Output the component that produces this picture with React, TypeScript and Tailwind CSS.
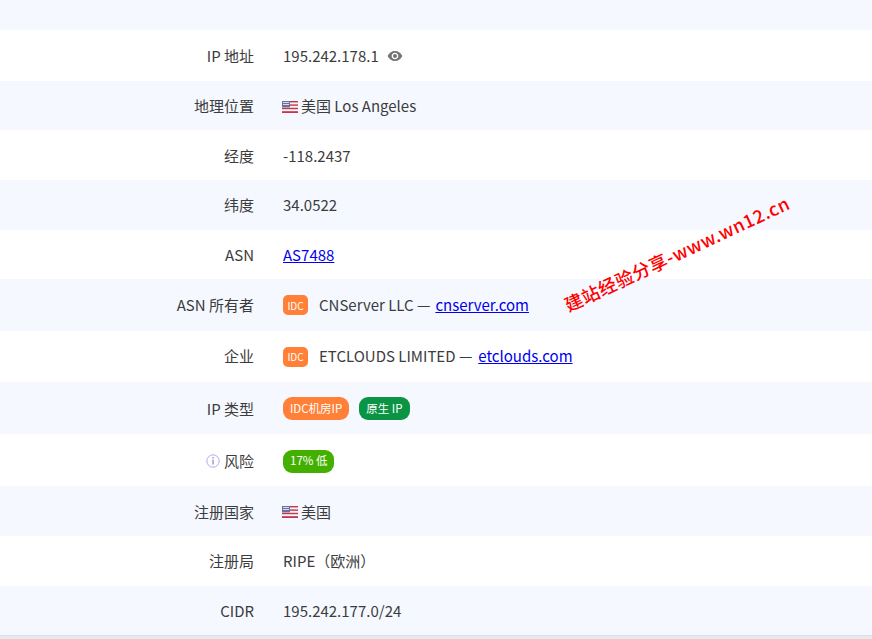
import { ReactNode } from 'react';

function UsFlag() {
  return (
    <svg width="16" height="12" viewBox="0 0 16 12" className="-ml-px shrink-0">
      <rect width="16" height="12" fill="#f4f4f6" />
      <rect y="0" width="16" height="1.4" fill="#c0394b" />
      <rect y="3.4" width="16" height="1.4" fill="#c0394b" />
      <rect y="6.8" width="16" height="1.4" fill="#c0394b" />
      <rect y="10.2" width="16" height="1.8" fill="#c0394b" />
      <rect width="8" height="6.4" fill="#6b6f9e" />
      <rect x="1" y="1" width="6" height="1" fill="#dcdcea" />
      <rect x="1" y="3" width="6" height="1" fill="#dcdcea" />
    </svg>
  );
}

function Eye() {
  return (
    <svg width="16" height="16" viewBox="0 0 24 24" fill="#757575" className="-mt-[2px] ml-2">
      <path d="M12 4.5C7 4.5 2.73 7.61 1 12c1.73 4.39 6 7.5 11 7.5s9.27-3.11 11-7.5c-1.73-4.39-6-7.5-11-7.5zM12 17c-2.76 0-5-2.24-5-5s2.24-5 5-5 5 2.24 5 5-2.24 5-5 5zm0-8c-1.66 0-3 1.34-3 3s1.34 3 3 3 3-1.34 3-3-1.34-3-3-3z" />
    </svg>
  );
}

function InfoIcon() {
  return (
    <svg width="14" height="14" viewBox="0 0 14 14" fill="none" className="mr-1">
      <circle cx="7" cy="7" r="6.2" stroke="#b9a6e8" strokeWidth="1" />
      <rect x="6.4" y="3" width="1.2" height="1.4" fill="#8f7fc4" />
      <rect x="6.4" y="5.6" width="1.2" height="5" fill="#8f7fc4" />
    </svg>
  );
}

function IdcBadge() {
  return (
    <span className="mr-[11px] flex h-5 w-[25px] items-center justify-center rounded-[5px] bg-[#ff8036] text-[10px] text-white">
      IDC
    </span>
  );
}

function Pill({ color, children }: { color: string; children: ReactNode }) {
  return (
    <span className={`flex h-[23px] items-center rounded-[9px] px-[7px] text-[11.5px] text-white ${color}`}>
      {children}
    </span>
  );
}

function Link({ children }: { children: ReactNode }) {
  return <a href="#" className="text-[#0000ee] underline">{children}</a>;
}

function Row({ label, height, alt, children }: { label: ReactNode; height: string; alt?: boolean; children: ReactNode }) {
  return (
    <div className={`flex items-center ${height} ${alt ? 'bg-[#f5f8ff]' : 'bg-white'}`}>
      <div className="flex w-[254px] items-center justify-end">{label}</div>
      <div className="ml-[29px] flex items-center">{children}</div>
    </div>
  );
}

export default function App() {
  return (
    <div className="relative h-[639px] overflow-hidden bg-[#e9e9e9] font-['Noto_Sans_CJK_SC','Noto_Sans',sans-serif] text-[15px] text-[#3c3c3c]">
      <div className="h-[30px] bg-[#f5f8ff]" />
      <Row label="IP 地址" height="h-[51px] pt-[2px]">195.242.178.1<Eye /></Row>
      <Row label="地理位置" height="h-[49px] pt-[2px]" alt><UsFlag /><span className="ml-[3px]">美国 Los Angeles</span></Row>
      <Row label="经度" height="h-[50px] pt-[2px]">-118.2437</Row>
      <Row label="纬度" height="h-[50px]" alt>34.0522</Row>
      <Row label="ASN" height="h-[49px] pt-[2px]"><Link>AS7488</Link></Row>
      <Row label="ASN 所有者" height="h-[52px]" alt>
        <IdcBadge />CNServer LLC — <span className="ml-[5px]"><Link>cnserver.com</Link></span>
      </Row>
      <Row label="企业" height="h-[51px]">
        <IdcBadge />ETCLOUDS LIMITED — <span className="ml-[6px]"><Link>etclouds.com</Link></span>
      </Row>
      <Row label="IP 类型" height="h-[52px] pt-[2px]" alt>
        <div className="-mt-px flex gap-[10px]">
          <Pill color="bg-[#ff8036]">IDC机房IP</Pill>
          <Pill color="bg-[#0a9444]">原生 IP</Pill>
        </div>
      </Row>
      <Row label={<><InfoIcon />风险</>} height="h-[52px] pt-[2px]">
        <Pill color="bg-[#43b000]">17% 低</Pill>
      </Row>
      <Row label="注册国家" height="h-[50px] pt-[2px]" alt><UsFlag /><span className="ml-[3px]">美国</span></Row>
      <Row label="注册局" height="h-[50px]">RIPE（欧洲）</Row>
      <Row label="CIDR" height="h-[49px] pt-[2px]" alt>195.242.177.0/24</Row>
      <div className="h-px bg-[#d5e0f8]" />
      <div className="absolute left-[565px] top-[291px] origin-left -rotate-[25deg] whitespace-nowrap text-lg font-medium tracking-[0.6px] text-[#f00]">
        建站经验分享-www.wn12.cn
      </div>
    </div>
  );
}
